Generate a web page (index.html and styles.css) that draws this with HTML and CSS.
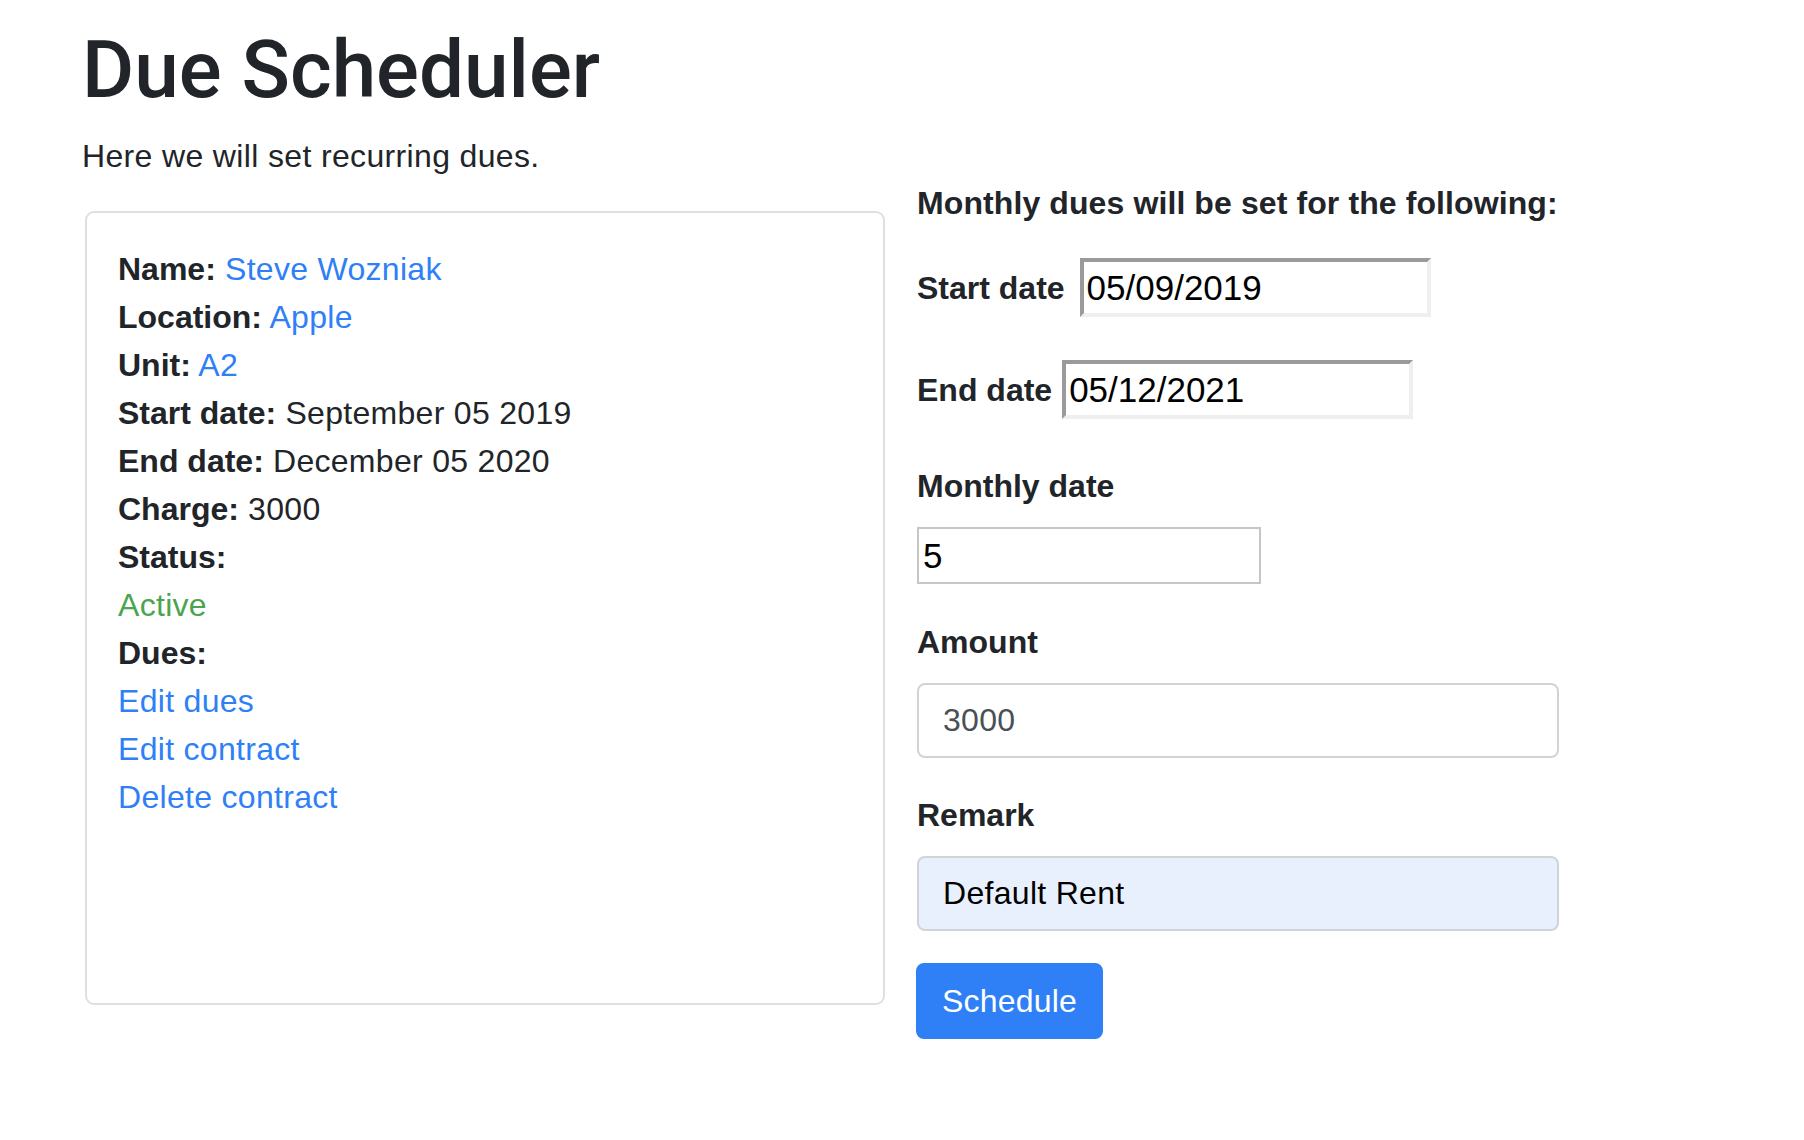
FILE: index.html
```html
<!DOCTYPE html>
<html lang="en">
<head>
<meta charset="utf-8">
<title>Due Scheduler</title>
<link rel="stylesheet" href="styles.css">
</head>
<body>
<div class="page">
  <h1 class="title">Due Scheduler</h1>
  <div class="row">
    <div class="col-left">
      <p class="lead">Here we will set recurring dues.</p>
      <div class="card">
        <div class="line"><b>Name:</b> <a class="link" href="#">Steve Wozniak</a></div>
        <div class="line"><b>Location:</b> <a class="link" href="#">Apple</a></div>
        <div class="line"><b>Unit:</b> <a class="link" href="#">A2</a></div>
        <div class="line"><b>Start date:</b> September 05 2019</div>
        <div class="line"><b>End date:</b> December 05 2020</div>
        <div class="line"><b>Charge:</b> 3000</div>
        <div class="line"><b>Status:</b></div>
        <div class="line status">Active</div>
        <div class="line"><b>Dues:</b></div>
        <div class="line"><a class="link" href="#">Edit dues</a></div>
        <div class="line"><a class="link" href="#">Edit contract</a></div>
        <div class="line"><a class="link" href="#">Delete contract</a></div>
      </div>
    </div>
    <div class="col-right">
      <p class="heading">Monthly dues will be set for the following:</p>
      <div class="inline-row first">
        <label class="label">Start date</label>
        <input class="date-input start" type="text" value="05/09/2019">
      </div>
      <div class="inline-row second">
        <label class="label">End date</label>
        <input class="date-input" type="text" value="05/12/2021">
      </div>
      <label class="label block monthly">Monthly date</label>
      <input class="plain-input" type="text" value="5">
      <label class="label block spaced">Amount</label>
      <input class="form-control" type="text" value="3000">
      <label class="label block spaced remark">Remark</label>
      <input class="form-control autofill" type="text" value="Default Rent">
      <button class="btn" type="button">Schedule</button>
    </div>
  </div>
</div>
</body>
</html>
```
FILE: styles.css
```css
html, body {
  margin: 0;
  padding: 0;
  background: #ffffff;
}

body {
  font-family: "Liberation Sans", Arial, sans-serif;
  font-size: 32px;
  line-height: 48px;
  color: #212529;
}

.page {
  padding: 22px 0 0 82px;
}

.title {
  margin: 0;
  font-family: Roboto, "Liberation Sans", sans-serif;
  font-weight: 500;
  font-size: 80px;
  line-height: 96px;
  color: #212529;
}

.row {
  display: flex;
  align-items: flex-start;
  gap: 32px;
}

.col-left {
  width: 803px;
  flex: none;
}

.lead {
  margin: 14px 0 31px 0;
  letter-spacing: 0.35px;
}

.card {
  box-sizing: border-box;
  margin-left: 3px;
  width: 800px;
  min-height: 794px;
  border: 2px solid #dfdfdf;
  border-radius: 9px;
  padding: 32px 30px 32px 31px;
  letter-spacing: 0.3px;
}

.line b {
  font-weight: 700;
  letter-spacing: 0;
}

.link {
  color: #2f7ff6;
  text-decoration: none;
}

.status {
  color: #4aa54e;
}

.col-right {
  width: 642px;
  flex: none;
  padding-top: 61px;
  display: flex;
  flex-direction: column;
  align-items: flex-start;
}

.heading {
  margin: 0;
  font-weight: 700;
  letter-spacing: 0.1px;
}

.label {
  font-weight: 700;
}

.label.block {
  display: block;
  margin-bottom: 17px;
}

.inline-row {
  display: flex;
  align-items: center;
  gap: 10px;
}

.inline-row.first {
  margin-top: 31px;
}

.inline-row.second {
  margin-top: 43px;
}

.date-input {
  box-sizing: border-box;
  width: 351px;
  height: 59px;
  margin: 0;
  padding: 0 3px;
  border-style: solid;
  border-width: 4px;
  border-color: #9a9a9a #efefef #efefef #9a9a9a;
  font-family: "Liberation Sans", Arial, sans-serif;
  font-size: 35px;
  color: #000000;
  background: #ffffff;
  outline: none;
}

.start {
  margin-left: 5px;
}

.monthly {
  margin-top: 43px;
}

.plain-input {
  box-sizing: border-box;
  width: 344px;
  height: 57px;
  margin: 0;
  padding: 0 4px;
  border: 2px solid #c6c6c6;
  font-family: "Liberation Sans", Arial, sans-serif;
  font-size: 35px;
  color: #000000;
  background: #ffffff;
  outline: none;
}

.spaced {
  margin-top: 34px;
}

.spaced.remark {
  margin-top: 33px;
}

.form-control {
  box-sizing: border-box;
  width: 642px;
  height: 75px;
  margin: 0;
  padding: 0 24px;
  border: 2px solid #d0d4d9;
  border-radius: 8px;
  font-family: "Liberation Sans", Arial, sans-serif;
  font-size: 32px;
  letter-spacing: 0.3px;
  color: #495057;
  background: #ffffff;
  outline: none;
}

.form-control.autofill {
  background: #e8f0fe;
  color: #000000;
}

.btn {
  box-sizing: border-box;
  margin-top: 32px;
  margin-left: -1px;
  height: 76px;
  padding: 0 24px;
  border: 2px solid #2f80f6;
  border-radius: 8px;
  background: #2f80f6;
  color: #ffffff;
  font-family: "Liberation Sans", Arial, sans-serif;
  font-size: 32px;
  line-height: 48px;
  letter-spacing: 0.2px;
  cursor: pointer;
}
```
